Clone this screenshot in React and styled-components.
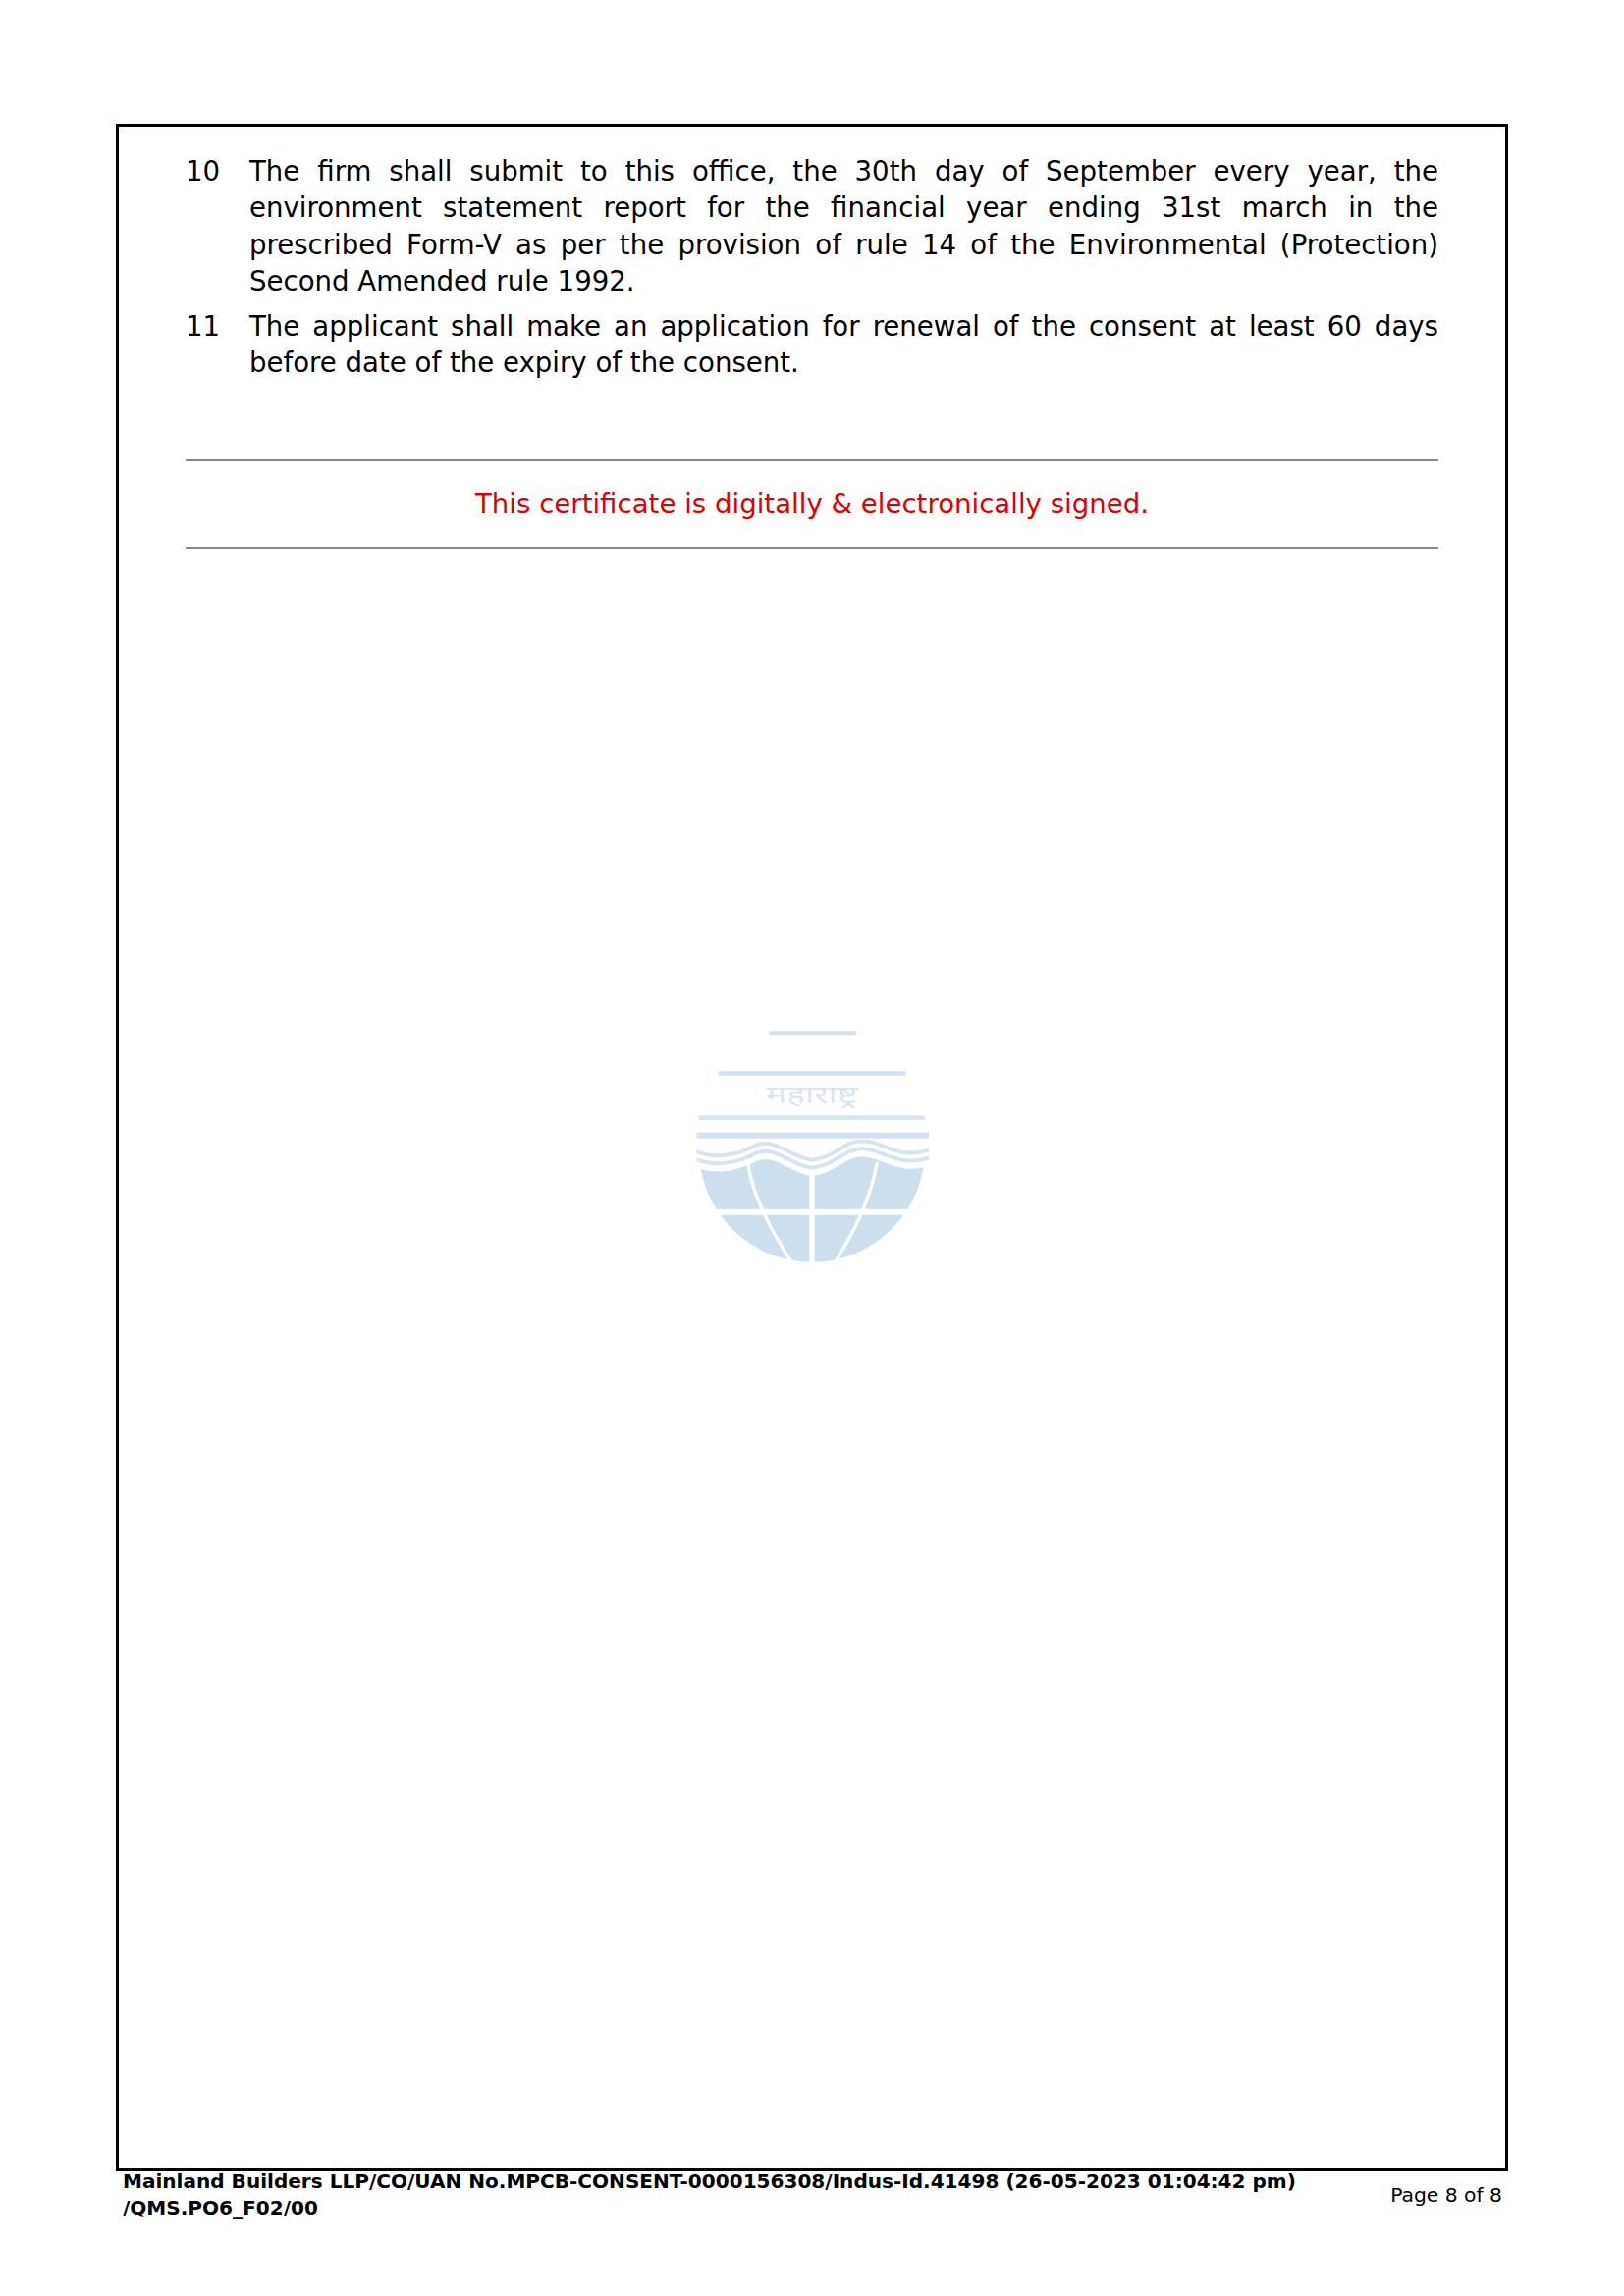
import React from "react";
import styled, { createGlobalStyle } from "styled-components";

const GlobalStyle = createGlobalStyle`
  html, body {
    margin: 0;
    padding: 0;
    background: #fff;
  }
  body {
    font-family: "DejaVu Sans", sans-serif;
    color: #000;
  }
`;

const Page = styled.div`
  width: 1654px;
  height: 2339px;
  padding: 126px 118px 0;
  box-sizing: border-box;
`;

const Frame = styled.div`
  position: relative;
  height: 2086px;
  box-sizing: border-box;
  border: 3px solid #000;
  padding: 27px 68px 0;
`;

const ClauseList = styled.ol`
  list-style: none;
  margin: 0;
  padding: 0;
  display: flex;
  flex-direction: column;
  gap: 9px;
`;

const Clause = styled.li`
  display: grid;
  grid-template-columns: 65px 1fr;
  font-size: 27.6px;
  line-height: 37.3px;
`;

const ClauseText = styled.div`
  text-align: justify;
`;

const Notice = styled.div`
  margin-top: 79px;
  height: 91px;
  box-sizing: border-box;
  display: flex;
  align-items: center;
  justify-content: center;
  border-top: 2px solid #888;
  border-bottom: 2px solid #888;
  color: #e00000;
  font-size: 27.6px;
`;

const Watermark = styled.svg`
  position: absolute;
  left: 50%;
  top: 50%;
  width: 300px;
  height: 280px;
  transform: translate(-50%, -50%);
`;

const Footer = styled.div`
  display: flex;
  justify-content: space-between;
  align-items: center;
  margin-top: -3px;
  padding: 0 6px 0 7px;
`;

const FooterRef = styled.div`
  font-size: 20.06px;
  font-weight: 700;
  line-height: 27px;
`;

const PageNumber = styled.div`
  font-size: 20.3px;
`;

const clauses = [
  {
    no: 10,
    text: "The firm shall submit to this office, the 30th day of September every year, the environment statement report for the financial year ending 31st march in the prescribed Form-V as per the provision of rule 14 of the Environmental (Protection) Second Amended rule 1992.",
  },
  {
    no: 11,
    text: "The applicant shall make an application for renewal of the consent at least 60 days before date of the expiry of the consent.",
  },
];

const wave = "M60 432 C130 470 200 462 270 425 C330 400 370 462 440 470 C510 465 540 408 600 412 C660 414 710 478 820 432";

const BoardLogo = () => (
  <Watermark viewBox="-9 0 900 840">
    <defs>
      <clipPath id="globe">
        <circle cx="441" cy="425" r="345" />
      </clipPath>
      <clipPath id="waves">
        <rect x="88" y="395" width="710" height="120" />
      </clipPath>
    </defs>
    <rect x="310" y="64" width="265" height="12" fill="#cfe0ef" />
    <rect x="155" y="187" width="573" height="13" fill="#cfe0ef" />
    <text
      x="440"
      y="285"
      textAnchor="middle"
      fontSize="78"
      textLength="280"
      lengthAdjust="spacingAndGlyphs"
      fill="#d8e5f1"
      fontFamily="'Noto Sans', 'DejaVu Sans', sans-serif"
    >
      महाराष्ट्र
    </text>
    <rect x="95" y="322" width="690" height="14" fill="#d8e5f1" />
    <rect x="88" y="374" width="710" height="18" fill="#d3e2f0" />
    <g clipPath="url(#globe)">
      <path d={`${wave} L820 800 L60 800 Z`} fill="#cbdfef" transform="translate(0 34)" />
    </g>
    <g clipPath="url(#waves)" fill="none">
      <path d={wave} stroke="#d6e4f1" strokeWidth="12" transform="translate(0 -12)" />
      <path d={wave} stroke="#d6e4f1" strokeWidth="12" transform="translate(0 12)" />
    </g>
    <g clipPath="url(#globe)" fill="none" stroke="#fff">
      <path d={wave} strokeWidth="9" transform="translate(0 32)" />
      <path d="M441 492 V780" strokeWidth="16" />
      <path d="M100 617 H780" strokeWidth="18" />
      <path d="M245 465 C258 570 320 680 385 780" strokeWidth="10" />
      <path d="M640 465 C622 570 570 680 505 780" strokeWidth="10" />
    </g>
  </Watermark>
);

export default function App() {
  return (
    <Page>
      <GlobalStyle />
      <Frame>
        <BoardLogo />
        <ClauseList>
          {clauses.map((clause) => (
            <Clause key={clause.no}>
              <span>{clause.no}</span>
              <ClauseText>{clause.text}</ClauseText>
            </Clause>
          ))}
        </ClauseList>
        <Notice>This certificate is digitally &amp; electronically signed.</Notice>
      </Frame>
      <Footer>
        <FooterRef>
          Mainland Builders LLP/CO/UAN No.MPCB-CONSENT-0000156308/Indus-Id.41498 (26-05-2023 01:04:42 pm)
          <br />
          /QMS.PO6_F02/00
        </FooterRef>
        <PageNumber>Page 8 of 8</PageNumber>
      </Footer>
    </Page>
  );
}
